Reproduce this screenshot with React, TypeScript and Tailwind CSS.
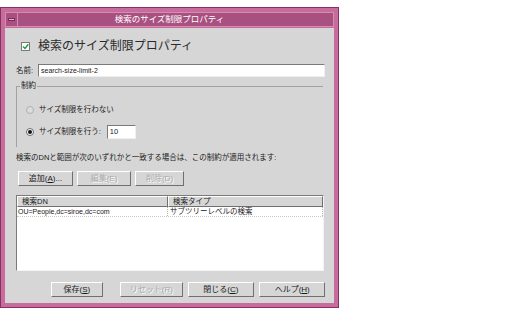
import React from "react";

const Btn = ({ w, children, disabled }: { w: string; children: React.ReactNode; disabled?: boolean }) => (
  <div
    className={`${w} h-[15px] flex items-center justify-center bg-[#d6d6d6] border border-t-white border-l-white border-b-[#6f6f6f] border-r-[#6f6f6f] text-[8px] leading-none ${disabled ? "text-[#a8a8a8] [text-shadow:1px_1px_0_#ffffff]" : "text-[#1a1a1a]"}`}
  >
    {children}
  </div>
);

export default function App() {
  return (
    <div className="w-[532px] h-[317px] bg-white pt-[7px] font-['Liberation_Sans','Noto_Sans_CJK_JP',sans-serif]">
      <div className="w-[339px] h-[301px] flex flex-col bg-[#c76c9c] border border-[#86325f] p-[4px] pb-[4px]">
        {/* title bar */}
        <div className="h-[15px] flex items-center bg-[#a8507f] border border-[#d48cb1]">
          <div className="w-[12px] h-[13px] border-r border-[#d48cb1] flex items-center justify-center">
            <div className="w-[7px] h-[3px] bg-[#e5b0cb] border border-[#7d2d59]" />
          </div>
          <div className="flex-1 text-center text-white text-[8.5px] leading-none pr-[12px]">
            検索のサイズ制限プロパティ
          </div>
        </div>
        {/* content */}
        <div className="flex-1 mt-[1px] bg-[#d6d6d6] pl-[11px] pr-[9px] flex flex-col text-[#1a1a1a]">
          {/* heading */}
          <div className="mt-[10px] h-[16px] flex items-center">
            <div className="ml-[5px] w-[9px] h-[9px] bg-white border border-[#7a7a7a] flex items-center justify-center">
              <svg width="7" height="7" viewBox="0 0 7 7">
                <path d="M1 3.5 L3 5.5 L6.3 1.2" stroke="#1f9a3a" strokeWidth="1.4" fill="none" />
              </svg>
            </div>
            <div className="ml-[8px] text-[12px] leading-none text-[#2a2a2a]">検索のサイズ制限プロパティ</div>
          </div>
          {/* name */}
          <div className="mt-[10px] h-[13px] flex items-center">
            <div className="w-[22px] text-[7.5px] leading-none">名前:</div>
            <div className="flex-1 h-[13px] bg-white border border-t-[#7a7a7a] border-l-[#7a7a7a] border-b-[#efefef] border-r-[#efefef] flex items-center pl-[2px] text-[7px] leading-none">
              search-size-limit-2
            </div>
          </div>
          {/* group box */}
          <div className="relative mt-[9px] h-[61px] border-t border-l border-[#a2a2a2] mr-[2px]">
            <div className="absolute -top-[5px] left-[3px] px-[1px] bg-[#d6d6d6] text-[7.5px] leading-none">制約</div>
            <div className="mt-[18px] ml-[9px] h-[10px] flex items-center">
              <div className="w-[8px] h-[8px] rounded-full border border-[#b0b0b0] bg-[#dcdcdc]" />
              <div className="ml-[5px] text-[7.5px] leading-none">サイズ制限を行わない</div>
            </div>
            <div className="mt-[10px] ml-[9px] h-[14px] flex items-center">
              <div className="w-[8px] h-[8px] rounded-full border border-[#6a6a6a] bg-white flex items-center justify-center">
                <div className="w-[4px] h-[4px] rounded-full bg-[#111]" />
              </div>
              <div className="ml-[5px] text-[7.5px] leading-none">サイズ制限を行う:</div>
              <div className="ml-[6px] w-[29px] h-[14px] bg-white border border-t-[#7a7a7a] border-l-[#7a7a7a] border-b-[#efefef] border-r-[#efefef] flex items-center pl-[2px] text-[7.5px] leading-none">
                10
              </div>
            </div>
          </div>
          {/* description */}
          <div className="mt-[5px] h-[11px] flex items-center text-[7.5px] leading-none">
            検索のDNと範囲が次のいずれかと一致する場合は、この制約が適用されます:
          </div>
          {/* buttons */}
          <div className="mt-[8px] flex gap-[4px] ml-[2px]">
            <Btn w="w-[55px]">
              追加(<span className="underline">A</span>)...
            </Btn>
            <Btn w="w-[54px]" disabled>
              編集(E)
            </Btn>
            <Btn w="w-[49px]" disabled>
              削除(D)
            </Btn>
          </div>
          {/* table */}
          <div className="mt-[9px] h-[76px] mr-[1px] bg-white border border-t-[#7a7a7a] border-l-[#7a7a7a] border-b-[#f4f4f4] border-r-[#f4f4f4] flex flex-col">
            <div className="h-[11px] flex bg-[#d6d6d6] text-[7.5px] leading-none">
              <div className="w-[151px] border border-t-white border-l-white border-b-[#6f6f6f] border-r-[#6f6f6f] flex items-center pl-[4px]">
                検索DN
              </div>
              <div className="flex-1 border border-t-white border-l-white border-b-[#6f6f6f] border-r-[#6f6f6f] flex items-center pl-[4px]">
                検索タイプ
              </div>
            </div>
            <div className="h-[10px] flex text-[7px] leading-none border-b border-dotted border-[#c8c8c8]">
              <div className="w-[151px] flex items-center pl-[1px] border-r border-dotted border-[#b0b0b0]">
                OU=People,dc=siroe,dc=com
              </div>
              <div className="flex-1 flex items-center pl-[2px] text-[7.5px] border-r border-dotted border-[#b0b0b0]">
                サブツリーレベルの検索
              </div>
            </div>
          </div>
          {/* bottom buttons */}
          <div className="mt-[11px] flex ml-[35px]">
            <Btn w="w-[53px]">
              保存(<span className="underline">S</span>)
            </Btn>
            <div className="w-[17px]" />
            <Btn w="w-[65px]" disabled>
              リセット(R)
            </Btn>
            <div className="w-[5px]" />
            <Btn w="w-[67px]">
              閉じる(<span className="underline">C</span>)
            </Btn>
            <div className="w-[6px]" />
            <Btn w="w-[67px]">
              ヘルプ(<span className="underline">H</span>)
            </Btn>
          </div>
        </div>
      </div>
    </div>
  );
}
